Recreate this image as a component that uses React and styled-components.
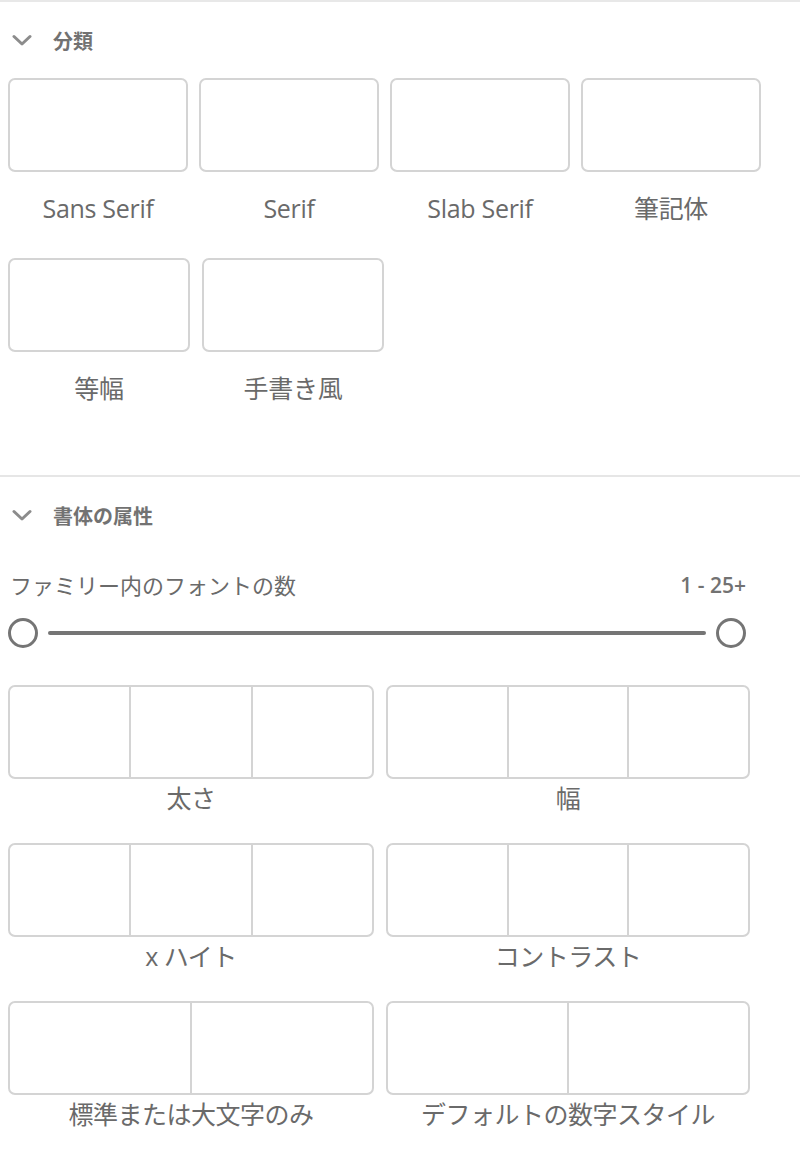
import styled, { createGlobalStyle } from 'styled-components';

const GlobalStyle = createGlobalStyle`
  body {
    margin: 0;
    background: #fff;
    font-family: 'Open Sans', 'Noto Sans CJK JP', sans-serif;
    color: #6f6f6f;
  }
`;

const categories = [
  ['Sans Serif', 'Serif', 'Slab Serif', '筆記体'],
  ['等幅', '手書き風'],
];

const attributes = [
  [
    { label: '太さ', parts: 3 },
    { label: '幅', parts: 3 },
  ],
  [
    { label: 'x ハイト', parts: 3 },
    { label: 'コントラスト', parts: 3 },
  ],
  [
    { label: '標準または大文字のみ', parts: 2 },
    { label: 'デフォルトの数字スタイル', parts: 2 },
  ],
];

const Chevron = () => (
  <svg width="20" height="13" viewBox="0 0 20 13">
    <polyline
      points="2,2.5 10,10 18,2.5"
      fill="none"
      stroke="#8c8c8c"
      strokeWidth="3"
      strokeLinecap="round"
      strokeLinejoin="round"
    />
  </svg>
);

const App = () => {
  return (
    <Page>
      <GlobalStyle />
      <Section>
        <Header>
          <Chevron />
          <HeaderTitle>分類</HeaderTitle>
        </Header>
        <CategoryRows>
          {categories.map((row, i) => (
            <CategoryRow key={i} wide={i === 1}>
              {row.map((name) => (
                <Card key={name}>
                  <Tile />
                  <CardLabel>{name}</CardLabel>
                </Card>
              ))}
            </CategoryRow>
          ))}
        </CategoryRows>
      </Section>

      <Section last>
        <Header>
          <Chevron />
          <HeaderTitle>書体の属性</HeaderTitle>
        </Header>
        <SliderHead>
          <SliderLabel>ファミリー内のフォントの数</SliderLabel>
          <SliderValue>1 - 25+</SliderValue>
        </SliderHead>
        <Slider>
          <Knob />
          <Track />
          <Knob />
        </Slider>
        <AttrGrid>
          {attributes.flat().map((attr) => (
            <AttrItem key={attr.label}>
              <Segments>
                {Array.from({ length: attr.parts }).map((_, i) => (
                  <Segment key={i} />
                ))}
              </Segments>
              <AttrLabel>{attr.label}</AttrLabel>
            </AttrItem>
          ))}
        </AttrGrid>
      </Section>
    </Page>
  );
};

export default App;

const Page = styled.div`
  width: 800px;
  border-top: 2px solid #e8e8e8;
`;

const Section = styled.section`
  padding: 0 8px ${(p) => (p.last ? '40px' : '71px')};
  border-bottom: ${(p) => (p.last ? 'none' : '2px solid #e6e6e6')};
`;

const Header = styled.div`
  height: 40px;
  margin-top: 18px;
  display: flex;
  align-items: center;
  gap: 21px;
  padding-left: 4px;
`;

const HeaderTitle = styled.h2`
  margin: 0;
  font-size: 20px;
  font-weight: 700;
  color: #727272;
`;

const CategoryRows = styled.div`
  margin-top: 18px;
  display: flex;
  flex-direction: column;
  gap: 34px;
`;

const CategoryRow = styled.div`
  display: grid;
  grid-template-columns: repeat(4, ${(p) => (p.wide ? '182px' : '180px')});
  column-gap: ${(p) => (p.wide ? '12px' : '11px')};
`;

const Card = styled.div`
  display: flex;
  flex-direction: column;
  align-items: center;
`;

const Tile = styled.div`
  width: 100%;
  height: 94px;
  box-sizing: border-box;
  border: 2px solid #d4d4d4;
  border-radius: 7px;
`;

const CardLabel = styled.div`
  margin-top: 20px;
  height: 32px;
  line-height: 32px;
  font-size: 25px;
  letter-spacing: -0.3px;
  color: #6a6a6a;
`;

const SliderHead = styled.div`
  margin-top: 34px;
  width: 738px;
  display: flex;
  justify-content: space-between;
  align-items: center;
  padding-left: 2px;
  box-sizing: border-box;
`;

const SliderLabel = styled.span`
  font-size: 22px;
  line-height: 32px;
  color: #6a6a6a;
`;

const SliderValue = styled.span`
  font-size: 21px;
  font-weight: 600;
  line-height: 32px;
  color: #727272;
`;

const Slider = styled.div`
  margin-top: 17px;
  width: 738px;
  height: 30px;
  display: flex;
  align-items: center;
  gap: 10px;
`;

const Knob = styled.div`
  width: 30px;
  height: 30px;
  box-sizing: border-box;
  border: 3.5px solid #757575;
  border-radius: 50%;
  flex-shrink: 0;
`;

const Track = styled.div`
  flex: 1;
  height: 4px;
  border-radius: 2px;
  background: #757575;
`;

const AttrGrid = styled.div`
  margin-top: 37px;
  width: 742px;
  display: grid;
  grid-template-columns: 366px 364px;
  column-gap: 12px;
  row-gap: 30px;
`;

const AttrItem = styled.div`
  display: flex;
  flex-direction: column;
  align-items: center;
`;

const Segments = styled.div`
  width: 100%;
  height: 94px;
  box-sizing: border-box;
  border: 2px solid #d4d4d4;
  border-radius: 7px;
  display: flex;
`;

const Segment = styled.div`
  flex: 1;
  & + & {
    border-left: 2px solid #d4d4d4;
  }
`;

const AttrLabel = styled.div`
  margin-top: 4px;
  height: 30px;
  line-height: 30px;
  font-size: 25px;
  letter-spacing: -0.5px;
  color: #6a6a6a;
`;
